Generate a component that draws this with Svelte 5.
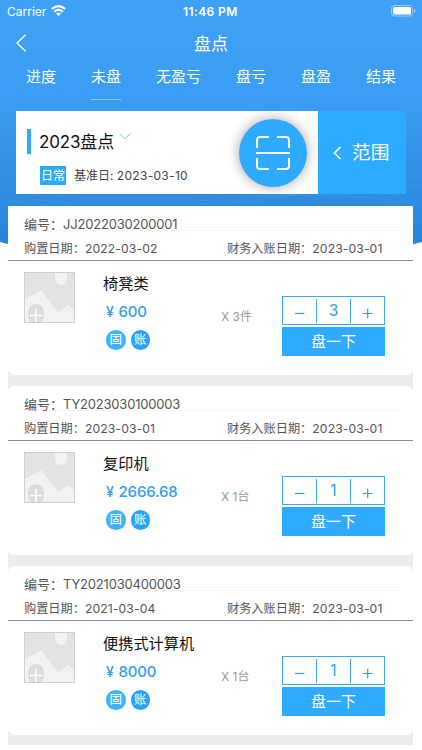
<script>
  const tabs = ['进度', '未盘', '无盈亏', '盘亏', '盘盈', '结果'];
  const items = [
    { code: 'JJ2022030200001', bought: '2022-03-02', booked: '2023-03-01', name: '椅凳类', price: '600', qty: 3, unit: '件' },
    { code: 'TY2023030100003', bought: '2023-03-01', booked: '2023-03-01', name: '复印机', price: '2666.68', qty: 1, unit: '台' },
    { code: 'TY2021030400003', bought: '2021-03-04', booked: '2023-03-01', name: '便携式计算机', price: '8000', qty: 1, unit: '台' }
  ];
</script>

<div class="screen">
  <svg class="backdrop" width="422" height="260" viewBox="0 0 422 260" aria-hidden="true">
    <defs>
      <linearGradient id="sky" x1="0" y1="0" x2="0" y2="1">
        <stop offset="0" stop-color="#3fa2f6" />
        <stop offset=".36" stop-color="#3b9df3" />
        <stop offset=".7" stop-color="#2f8de1" />
        <stop offset="1" stop-color="#2383da" />
      </linearGradient>
    </defs>
    <path d="M0 0H422V242Q211 300 0 242Z" fill="url(#sky)" />
    <g fill="none" stroke="#59aef5" stroke-opacity=".22" stroke-width=".7">
      <path d="M0 190Q90 205 211 197T422 205" />
      <path d="M0 194Q90 211 211 200T422 196" />
      <path d="M0 198Q90 216 211 203T422 186" />
      <path d="M0 203Q90 221 211 206T422 176" />
    </g>
  </svg>

  <div class="status">
    <span class="carrier">Carrier</span>
    <svg class="wifi" width="15" height="11" viewBox="0 0 15 11">
      <g fill="none" stroke="#fff" stroke-width="2">
        <path d="M.8 4.1Q7.5 -1.9 14.2 4.1" />
        <path d="M3.2 6.7Q7.5 2.9 11.8 6.7" />
      </g>
      <path d="M5.1 8.4Q7.5 6.5 9.9 8.4L7.5 10.9Z" fill="#fff" />
    </svg>
    <span class="clock">11:46 PM</span>
    <svg class="battery" width="25" height="12" viewBox="0 0 25 12">
      <rect x=".5" y=".5" width="21" height="10.5" rx="3" fill="none" stroke="#fff" stroke-opacity=".45" />
      <rect x="2" y="2" width="18" height="7.5" rx="1.6" fill="#fff" />
      <path d="M23 4V7.8Q24.3 7.2 24.3 5.9T23 4Z" fill="#fff" fill-opacity=".6" />
    </svg>
  </div>

  <header>
    <svg width="11" height="18" viewBox="0 0 11 18"><path d="M9.6 .8L1 9L9.6 17.2" fill="none" stroke="#fff" stroke-width="1.3" /></svg>
    <h1>盘点</h1>
  </header>

  <nav>
    {#each tabs as tab, i}
      <span class:active={i === 1}>{tab}</span>
    {/each}
  </nav>

  <section class="plan">
    <div class="info">
      <div class="title">
        <i></i><b>2023盘点</b>
        <svg width="12" height="7" viewBox="0 0 12 7"><path d="M.7 .8L6 5.5L11.3 .8" fill="none" stroke="#62bdf8" stroke-width=".9" /></svg>
      </div>
      <div class="base"><em>日常</em><span>基准日: <span class="day">2023-03-10</span></span></div>
    </div>
    <div class="scan">
      <svg width="36" height="36" viewBox="0 0 36 36" fill="none" stroke="#fff" stroke-width="2">
        <path d="M2 13V5Q2 2 5 2H14M22 2H31Q34 2 34 5V13M34 23V31Q34 34 31 34H22M14 34H5Q2 34 2 31V23M1 18H35" />
      </svg>
    </div>
    <div class="range">
      <svg width="9" height="14" viewBox="0 0 9 14"><path d="M7.5 1L1.5 7L7.5 13" fill="none" stroke="#fff" stroke-width="1.6" /></svg>
      <span>范围</span>
    </div>
  </section>

  <main>
    {#each items as item}
      <article>
        <div class="code">编号：<span>{item.code}</span></div>
        <div class="dates">
          <span class="bought">购置日期：<span class="date">{item.bought}</span></span>
          <span>财务入账日期：<span class="date">{item.booked}</span></span>
        </div>
        <div class="body">
          <svg class="thumb" width="51" height="51" viewBox="0 0 51 51">
            <rect x=".5" y=".5" width="50" height="50" fill="#e4e3e4" stroke="#cfcfcf" />
            <path d="M31 1H43V6Q43 13 37 13Q31 13 31 6Z" fill="#f3f2f3" />
            <path d="M1 27L17 18L34 40L45 33L50 38V50H1Z" fill="#f3f2f3" />
            <path d="M6 50Q4 47 4 42Q4 32 12 32Q20 32 20 42Q20 47 18 50Z" fill="#dddcdd" />
            <path d="M11.8 37V50M6 43.5H18" stroke="#fff" stroke-width="1.5" />
          </svg>
          <div class="detail">
            <div class="name">{item.name}</div>
            <div class="price"><span>¥</span>{item.price}</div>
            <div class="tags"><span>固</span><span>账</span></div>
          </div>
          <div class="count">X {item.qty}{item.unit}</div>
          <div class="actions">
            <div class="stepper">
              <svg width="33" height="23" viewBox="0 0 33 23"><path d="M12 12.5H21.5" stroke="#2d9fec" stroke-width="1.2" /></svg>
              <span>{item.qty}</span>
              <svg width="33" height="23" viewBox="0 0 33 23"><path d="M12 12.5H21.5M16.7 7.7V17.3" stroke="#2d9fec" stroke-width="1.2" /></svg>
            </div>
            <button>盘一下</button>
          </div>
        </div>
      </article>
    {/each}
  </main>
</div>

<style>
  .screen {
    position: relative;
    width: 422px;
    height: 750px;
    overflow: hidden;
    background: #fff;
    font-family: Inter, "Noto Sans CJK SC", sans-serif;
    color: #555;
    white-space: nowrap;
  }
  .backdrop { position: absolute; left: 0; top: 0; }
  .status, header, nav, .plan, main { position: relative; box-sizing: border-box; }
  .status { height: 22px; display: flex; align-items: center; padding: 0 6px 0 7px; color: #fff; font-size: 12px; }
  .carrier { width: 44px; letter-spacing: 0; }
  .wifi { margin-top: -1px; }
  .clock { margin-left: 117px; width: 60px; font-weight: 600; font-size: 12px; letter-spacing: .4px; }
  .battery { margin-left: auto; }
  header { height: 42px; display: flex; align-items: center; padding-left: 16px; color: #fff; }
  h1 { margin: 1px 0 0 167px; font-size: 17px; line-height: 24px; font-weight: 400; }
  nav { height: 47px; display: flex; justify-content: space-between; padding: 1px 26px 0; color: #fff; font-size: 15px; line-height: 24px; }
  nav span { height: 35px; box-sizing: border-box; }
  nav .active { border-bottom: 1px solid #8cc8fa; }
  .plan { margin: 0 16px; height: 83px; display: flex; background: #fff; }
  .info { width: 223px; padding: 18px 0 0 11px; box-sizing: border-box; }
  .title { display: flex; align-items: center; height: 25px; }
  .title i { width: 4px; height: 25px; background: #2ea9fb; }
  .title b { margin: 0 5px 0 8px; font-weight: 400; color: #111; font-size: 17px; line-height: 24px; letter-spacing: -.15px; }
  .title svg { margin-top: -10px; }
  .base { display: flex; align-items: center; margin: 12px 0 0 13px; }
  .base em { font-style: normal; width: 26px; text-align: center; background: #2eaafd; color: #fff; font-size: 12px; line-height: 19px; }
  .base > span { margin-left: 8px; font-size: 12px; line-height: 19px; color: #444; }
  .day { letter-spacing: .3px; }
  .scan { width: 68px; height: 68px; margin-top: 8px; border-radius: 50%; display: grid; place-items: center; background: #2eaaff; box-shadow: 0 0 12px 1px #b5afb3; flex: none; clip-path: inset(-8px -11px -7px -20px); }
  .range { margin-left: auto; width: 88px; display: flex; align-items: center; background: #2eaaff; color: #fff; font-size: 18.7px; line-height: 27px; }
  .range svg { margin: 0 10px 0 15px; }
  main { margin: 12px 9px 0 8px; background: #ededed; display: flex; flex-direction: column; gap: 11px; padding-bottom: 10px; }
  article { height: 169px; box-sizing: border-box; background: #fff; border-radius: 6px; }
  article:first-child { border-radius: 0 2px 6px 6px; }
  .code { height: 25px; box-sizing: border-box; margin: 0 13px 0 16px; padding-top: 8px; border-bottom: 1px solid #f6f6f6; font-size: 13px; line-height: 20px; }
  .code span { letter-spacing: -.2px; }
  .dates { height: 30px; box-sizing: border-box; padding: 8px 0 0 16px; border-bottom: 1px solid #888; display: flex; font-size: 12.2px; line-height: 20px; }
  .date { letter-spacing: .1px; }
  .bought { width: 203px; }
  .body { display: flex; padding-left: 16px; }
  .thumb { margin-top: 11px; flex: none; }
  .detail { width: 118px; margin: 12px 0 0 28px; }
  .name { font-size: 15.2px; line-height: 22px; color: #111; }
  .price { margin: 6px 0 0 3px; font-size: 15px; line-height: 22px; color: #2f9fed; font-weight: 500; letter-spacing: -.15px; }
  .price span { display: inline-block; width: 12.5px; font-size: 14px; }
  .tags { display: flex; gap: 5px; margin: 7px 0 0 3px; }
  .tags span { width: 19.5px; height: 19.5px; border-radius: 50%; background: #40b3f8; color: #fff; font-size: 12.5px; line-height: 19px; text-align: center; }
  .tags span + span { background: #2ba2fa; }
  .count { width: 61px; margin-top: 46px; font-size: 12px; line-height: 20px; color: #999; }
  .actions { width: 103px; margin-top: 35px; }
  .stepper { display: flex; align-items: center; box-sizing: border-box; height: 29px; border: 1px solid #3ba8ef; color: #2f9fed; }
  .stepper svg { margin-top: 4px; }
  .stepper span { flex: 1; box-sizing: border-box; height: 24px; text-align: center; font-size: 15.5px; line-height: 24px; border: solid #3ba8ef; border-width: 0 1px; }
  button { display: block; width: 103px; height: 29px; margin: 2px 0 0; padding: 0 0 1px; border: 0; background: #2eaaff; color: #fff; font: 15px/27px Inter, "Noto Sans CJK SC", sans-serif; }
</style>
